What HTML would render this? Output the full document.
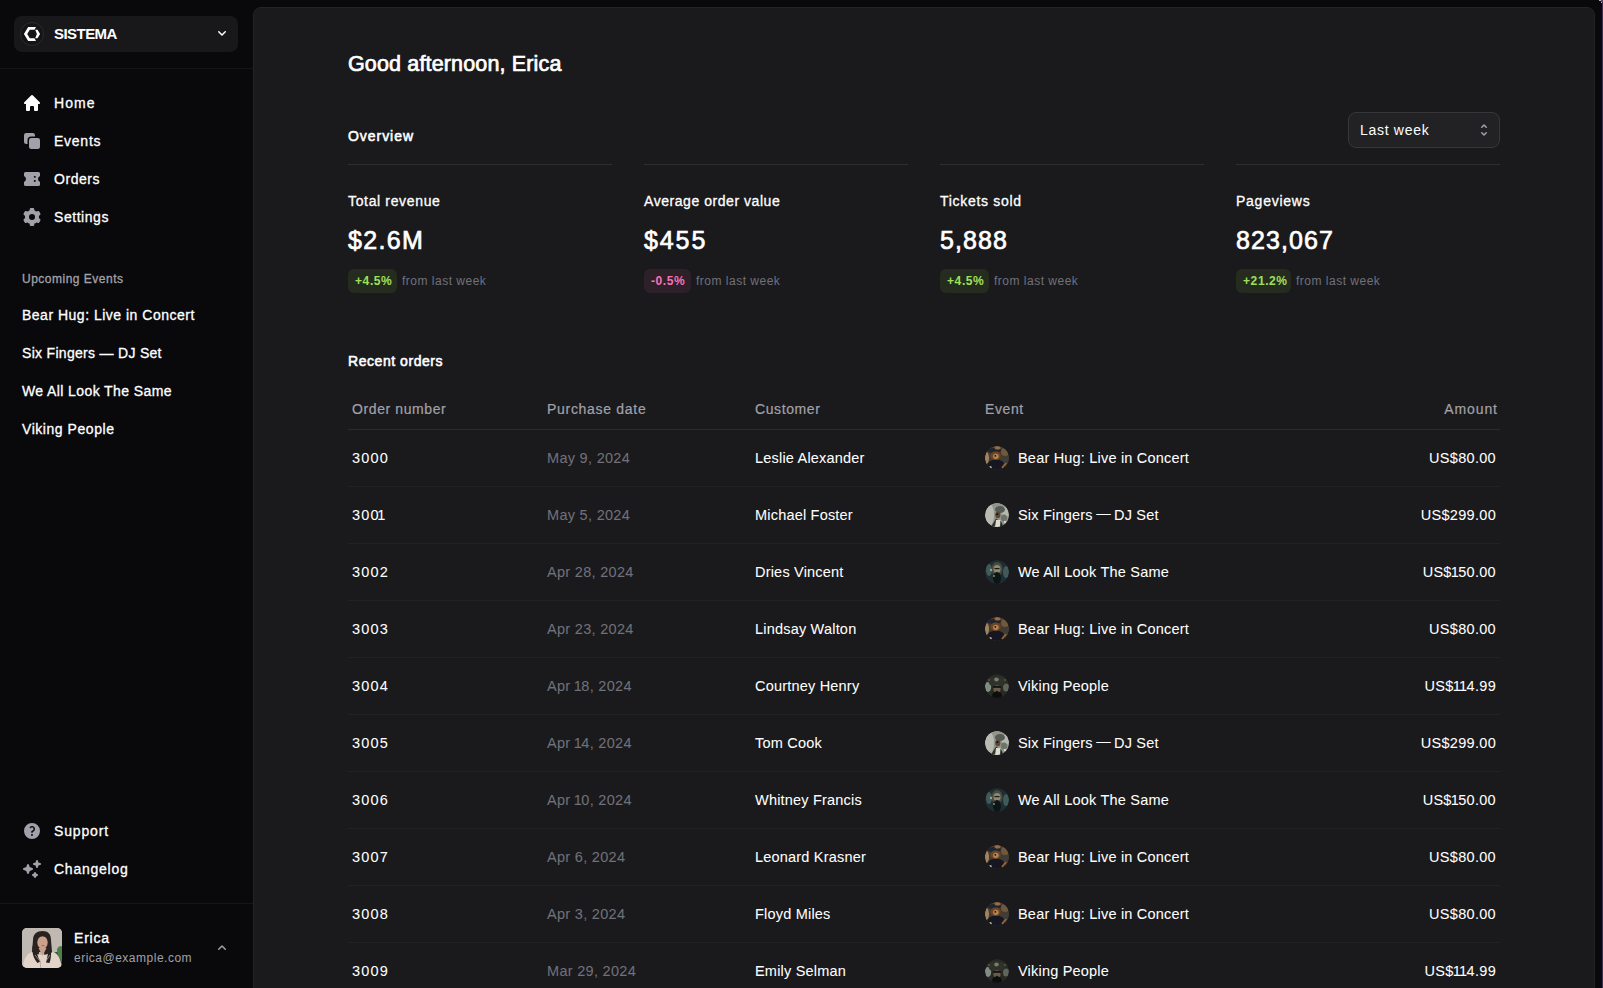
<!DOCTYPE html>
<html><head><meta charset="utf-8"><title>Dashboard</title>
<style>
*{box-sizing:border-box;margin:0;padding:0}
html,body{width:1603px;height:988px;overflow:hidden;background:#09090b;font-family:"Liberation Sans",sans-serif;color:#fff}
.abs{position:absolute}
.t{position:absolute;white-space:nowrap;line-height:1}
#sb{position:absolute;left:0;top:0;width:253px;height:988px;background:#09090b}
.team{position:absolute;left:14px;top:16px;width:224px;height:36px;border-radius:8px;background:#18181a}
.sep{position:absolute;left:0;width:253px;height:1px;background:#161618}
.nav{font-size:14px;font-weight:400;-webkit-text-stroke:.3px currentColor}
.ico{position:absolute;width:20px;height:20px}
#panel{position:absolute;left:253px;top:7px;width:1342px;height:1000px;background:#1a1a1c;border:1px solid #242427;border-radius:8px}
.divider{position:absolute;height:1px;background:#2e2e31}
.sttl{font-size:14px;font-weight:400;-webkit-text-stroke:.3px #fff}
.sval{font-size:25px;font-weight:400;-webkit-text-stroke:.7px #fff}
.badge{position:absolute;height:24px;border-radius:6px;font-size:12px;font-weight:700;line-height:24px;padding:0 0 0 7px;white-space:nowrap;letter-spacing:.6px}
.g{background:#252c1f;color:#9fe05a}
.p{background:#2d2029;color:#f472b6}
.from{font-size:12px;color:#71717a;letter-spacing:.5px}
.th{font-size:14px;color:#a1a1aa;letter-spacing:.6px;-webkit-text-stroke:.2px currentColor}
.rl{position:absolute;left:348px;width:1152px;height:1px;background:#222225}
.td{font-size:14.5px;letter-spacing:.2px;-webkit-text-stroke:.05px currentColor}
.num{letter-spacing:1px}
.dt{color:#71717a;letter-spacing:.3px}
.ev{position:absolute;width:24px;height:24px;border-radius:50%;overflow:hidden}

.bear{background:radial-gradient(circle at 50% 45%,#6b4a32 0,#3d2c22 45%,#5a4636 70%,#2a211c 100%)}
.six{background:radial-gradient(circle at 55% 45%,#3a3a3a 0,#8a8a86 40%,#cfcfca 75%,#6e6e6a 100%)}
.same{background:radial-gradient(circle at 50% 50%,#6d7a78 0,#2d3a3d 45%,#17262b 80%,#324649 100%)}
.vik{background:radial-gradient(circle at 50% 50%,#5b5e54 0,#262a24 50%,#3e4a3c 80%,#1e2420 100%)}
</style></head>
<body>

<div id="sb">
  <div class="team"></div>
  <div class="abs" style="left:20px;top:22px;width:24px;height:24px;border-radius:50%;border:1px solid #2c2c2e;background:#141416"></div>
  <svg class="abs" style="left:18px;top:20px" width="30" height="28" viewBox="0 0 30 28"><path fill="#fff" d="M10.2 7.1H18L16.5 9.8H11.8L9.2 14L11.8 18.2H16.5L18 20.9H10.2L5.9 14Z M17.2 9.7H19.5L22.1 14L19.5 18.3H17.2L18.9 14Z"/></svg>
  <div class="t" style="left:54px;top:26px;font-size:15px;font-weight:700;letter-spacing:-.55px">SISTEMA</div>
  <svg class="abs" style="left:214px;top:25px" width="16" height="16" viewBox="0 0 16 16"><path fill="#fff" fill-rule="evenodd" d="M4.22 6.22a.75.75 0 0 1 1.06 0L8 8.94l2.72-2.72a.75.75 0 1 1 1.06 1.06l-3.25 3.25a.75.75 0 0 1-1.06 0L4.22 7.28a.75.75 0 0 1 0-1.06Z"/></svg>
  <div class="sep" style="top:68px"></div>

  <svg class="ico" style="left:22px;top:93px" viewBox="0 0 20 20"><path fill="#fff" d="M9.293 2.293a1 1 0 0 1 1.414 0l7 7A1 1 0 0 1 17 11h-1v6a1 1 0 0 1-1 1h-2a1 1 0 0 1-1-1v-3a1 1 0 0 0-1-1H9a1 1 0 0 0-1 1v3a1 1 0 0 1-1 1H5a1 1 0 0 1-1-1v-6H3a1 1 0 0 1-.707-1.707l7-7Z"/></svg>
  <div class="t nav" style="letter-spacing:1.05px;left:54px;top:96px">Home</div>
  <svg class="ico" style="left:22px;top:131px" viewBox="0 0 20 20"><path fill="#a1a1aa" d="M2 4.25A2.25 2.25 0 0 1 4.25 2h6.5A2.25 2.25 0 0 1 13 4.25V5.5H9.25A3.75 3.75 0 0 0 5.5 9.25V13H4.25A2.25 2.25 0 0 1 2 10.75v-6.5Z"/><path fill="#a1a1aa" d="M9.25 7A2.25 2.25 0 0 0 7 9.25v6.5A2.25 2.25 0 0 0 9.25 18h6.5A2.25 2.25 0 0 0 18 15.75v-6.5A2.25 2.25 0 0 0 15.75 7h-6.5Z"/></svg>
  <div class="t nav" style="letter-spacing:0.75px;left:54px;top:134px">Events</div>
  <svg class="ico" style="left:22px;top:169px" viewBox="0 0 20 20"><path fill="#a1a1aa" fill-rule="evenodd" d="M3.5 3H16.5A1.5 1.5 0 0 1 18 4.5V7A3.25 3.25 0 0 0 18 13V15.5A1.5 1.5 0 0 1 16.5 17H3.5A1.5 1.5 0 0 1 2 15.5V13A3.25 3.25 0 0 0 2 7V4.5A1.5 1.5 0 0 1 3.5 3Z M12.6 7h.4a.8.8 0 0 1 .8.8v.1a.8.8 0 0 1-.8.8h-.4a.8.8 0 0 1-.8-.8v-.1a.8.8 0 0 1 .8-.8Z M12.6 11.1h.4a.8.8 0 0 1 .8.8v.2a.8.8 0 0 1-.8.8h-.4a.8.8 0 0 1-.8-.8v-.2a.8.8 0 0 1 .8-.8Z"/></svg>
  <div class="t nav" style="letter-spacing:0.55px;left:54px;top:172px">Orders</div>
  <svg class="ico" style="left:22px;top:207px" viewBox="0 0 20 20"><path fill="#a1a1aa" fill-rule="evenodd" d="M7.84 1.804A1 1 0 0 1 8.82 1h2.36a1 1 0 0 1 .98.804l.331 1.652a6.993 6.993 0 0 1 1.929 1.115l1.598-.54a1 1 0 0 1 1.186.447l1.18 2.044a1 1 0 0 1-.205 1.251l-1.267 1.113a7.047 7.047 0 0 1 0 2.228l1.267 1.113a1 1 0 0 1 .206 1.25l-1.18 2.045a1 1 0 0 1-1.187.447l-1.598-.54a6.993 6.993 0 0 1-1.929 1.115l-.33 1.652a1 1 0 0 1-.98.804H8.82a1 1 0 0 1-.98-.804l-.331-1.652a6.993 6.993 0 0 1-1.929-1.115l-1.598.54a1 1 0 0 1-1.186-.447l-1.18-2.044a1 1 0 0 1 .205-1.251l1.267-1.114a7.05 7.05 0 0 1 0-2.227L1.821 7.773a1 1 0 0 1-.206-1.25l1.18-2.045a1 1 0 0 1 1.187-.447l1.598.54A6.992 6.992 0 0 1 7.51 3.456l.33-1.652ZM10 13a3 3 0 1 0 0-6 3 3 0 0 0 0 6Z"/></svg>
  <div class="t nav" style="letter-spacing:0.55px;left:54px;top:210px">Settings</div>

  <div class="t" style="left:22px;top:273px;font-size:12px;color:#a1a1aa;letter-spacing:.5px;-webkit-text-stroke:.3px #a1a1aa">Upcoming Events</div>
  <div class="t nav" style="letter-spacing:0.5px;left:22px;top:308px">Bear Hug: Live in Concert</div>
  <div class="t nav" style="letter-spacing:0.3px;left:22px;top:346px">Six Fingers — DJ Set</div>
  <div class="t nav" style="letter-spacing:0.4px;left:22px;top:384px">We All Look The Same</div>
  <div class="t nav" style="letter-spacing:0.55px;left:22px;top:422px">Viking People</div>

  <svg class="ico" style="left:22px;top:821px" viewBox="0 0 20 20"><path fill="#a1a1aa" fill-rule="evenodd" d="M18 10a8 8 0 1 1-16 0 8 8 0 0 1 16 0ZM8.94 6.94a.75.75 0 1 1-1.061-1.061 3 3 0 1 1 2.871 5.026v.345a.75.75 0 0 1-1.5 0v-.5c0-.72.57-1.172 1.081-1.287A1.5 1.5 0 1 0 8.94 6.94ZM10 15a1 1 0 1 0 0-2 1 1 0 0 0 0 2Z"/></svg>
  <div class="t nav" style="letter-spacing:0.85px;left:54px;top:824px">Support</div>
  <svg class="ico" style="left:22px;top:859px" viewBox="0 0 20 20"><path fill="#a1a1aa" d="M15.98 1.804a1 1 0 0 0-1.96 0l-.24 1.192a1 1 0 0 1-.784.785l-1.192.238a1 1 0 0 0 0 1.962l1.192.238a1 1 0 0 1 .785.785l.238 1.192a1 1 0 0 0 1.962 0l.238-1.192a1 1 0 0 1 .785-.785l1.192-.238a1 1 0 0 0 0-1.962l-1.192-.238a1 1 0 0 1-.785-.785l-.238-1.192ZM6.949 5.684a1 1 0 0 0-1.898 0l-.683 2.051a1 1 0 0 1-.633.633l-2.051.683a1 1 0 0 0 0 1.898l2.051.684a1 1 0 0 1 .633.632l.683 2.051a1 1 0 0 0 1.898 0l.683-2.051a1 1 0 0 1 .633-.633l2.051-.683a1 1 0 0 0 0-1.898l-2.051-.683a1 1 0 0 1-.633-.633L6.95 5.684ZM13.949 13.684a1 1 0 0 0-1.898 0l-.184.551a1 1 0 0 1-.632.633l-.551.183a1 1 0 0 0 0 1.898l.551.183a1 1 0 0 1 .633.633l.183.551a1 1 0 0 0 1.898 0l.184-.551a1 1 0 0 1 .632-.633l.551-.183a1 1 0 0 0 0-1.898l-.551-.184a1 1 0 0 1-.633-.632l-.183-.551Z"/></svg>
  <div class="t nav" style="letter-spacing:0.75px;left:54px;top:862px">Changelog</div>

  <div class="sep" style="top:903px"></div>
  <div class="abs" style="left:22px;top:928px;width:40px;height:40px;border-radius:5px;overflow:hidden;background:#bdb6ae">
    <svg width="40" height="40" viewBox="0 0 40 40"><defs><filter id="fu" x="-10%" y="-10%" width="120%" height="120%"><feGaussianBlur stdDeviation="0.7"/></filter></defs><g filter="url(#fu)"><rect x="-2" y="-2" width="44" height="44" fill="#c0b9b1"/><path d="M27 27c4-3 8-4 14-3v17H29z" fill="#33553a"/><path d="M35 21c2-4 6-4 6 0v13c-3-2-6-7-6-13z" fill="#4f8048"/><path d="M11 12c0-6 4-9 9.5-9S29 6 29 12l1 12c0 5 0 9-1 12h-6l-1-12h-5l-1 12h-5c-1-4-1-8-1-12z" fill="#2a2220"/><path d="M1 41c0-9 3-15 9-17l3 1c2 1 5 2 7.5 2s5-1 7-2l4-1c5 2 8 8 8 17z" fill="#e3d4ca"/><path d="M16.5 20h8l-4 8z" fill="#c99f8a"/><path d="M10.5 18c-.5 6 .5 12 5 17l3-1.5c-3-4-4-10-4-15zM26 18c.5 6-.5 11-2 16.5l3.5.5c1.5-4 2-10 1.5-17z" fill="#2a2220"/><ellipse cx="20.5" cy="14.5" rx="5.2" ry="6.5" fill="#c9a18c"/><path d="M14.5 11.5c0-5 2.5-7.5 6-7.5s6.5 2.5 6.5 7.5c-2-2.2-4-3.3-6.5-3.3s-4 1.1-6 3.3z" fill="#2a2220"/><ellipse cx="21" cy="17.6" rx="1.5" ry=".6" fill="#a0605a"/><path d="M13 27l5 6 1 8M28 27l-4 6" stroke="#b89c90" stroke-width=".8" fill="none"/></g></svg>
  </div>
  <div class="t" style="left:74px;top:931px;font-size:14px;letter-spacing:.8px;-webkit-text-stroke:.35px #fff">Erica</div>
  <div class="t" style="left:74px;top:952px;font-size:12px;color:#a1a1aa;letter-spacing:.5px">erica@example.com</div>
  <svg class="abs" style="left:214px;top:940px" width="16" height="16" viewBox="0 0 16 16"><path fill="#a1a1aa" fill-rule="evenodd" d="M11.78 9.78a.75.75 0 0 1-1.06 0L8 7.06 5.28 9.78a.75.75 0 0 1-1.06-1.06l3.25-3.25a.75.75 0 0 1 1.06 0l3.25 3.25a.75.75 0 0 1 0 1.06Z"/></svg>
</div>

<div id="panel"></div>
<div class="abs" style="left:1602px;top:0;width:1px;height:988px;background:#432f55"></div><div class="abs" style="left:1599px;top:0;width:2px;height:1px;background:#b9aed0"></div><div class="abs" style="left:1601px;top:2px;width:1px;height:1px;background:#b9aed0"></div><div class="abs" style="left:1601px;top:0;width:2px;height:2px;background:#5a4a70"></div>

<div class="t" style="left:348px;top:54px;font-size:21.5px;font-weight:400;letter-spacing:.15px;-webkit-text-stroke:.7px #fff">Good afternoon, Erica</div>
<div class="t" style="left:348px;top:129px;font-size:14px;letter-spacing:.95px;-webkit-text-stroke:.55px #fff">Overview</div>
<div class="abs" style="left:1348px;top:112px;width:152px;height:36px;border-radius:8px;border:1px solid #37373a;background:#222225"></div>
<div class="t" style="left:1360px;top:123px;font-size:14px;letter-spacing:.7px">Last week</div>
<svg class="abs" style="left:1476px;top:122px" width="16" height="16" viewBox="0 0 16 16" fill="none"><path d="M5.75 10.75L8 13L10.25 10.75" stroke="#a1a1aa" stroke-width="1.5" stroke-linecap="round" stroke-linejoin="round"/><path d="M10.25 5.25L8 3L5.75 5.25" stroke="#a1a1aa" stroke-width="1.5" stroke-linecap="round" stroke-linejoin="round"/></svg>

<div class="divider" style="left:348px;top:164px;width:264px"></div>
<div class="t sttl" style="left:348px;top:194px;letter-spacing:0.65px">Total revenue</div>
<div class="t sval" style="left:348px;top:228px;letter-spacing:1.35px">$2.6M</div>
<div class="badge g" style="left:348px;top:269px;width:49px">+4.5%</div>
<div class="t from" style="left:402px;top:275px">from last week</div>
<div class="divider" style="left:644px;top:164px;width:264px"></div>
<div class="t sttl" style="left:644px;top:194px;letter-spacing:0.55px">Average order value</div>
<div class="t sval" style="left:644px;top:228px;letter-spacing:1.9px">$455</div>
<div class="badge p" style="left:644px;top:269px;width:47px">-0.5%</div>
<div class="t from" style="left:696px;top:275px">from last week</div>
<div class="divider" style="left:940px;top:164px;width:264px"></div>
<div class="t sttl" style="left:940px;top:194px;letter-spacing:0.7px">Tickets sold</div>
<div class="t sval" style="left:940px;top:228px;letter-spacing:1.1px">5,888</div>
<div class="badge g" style="left:940px;top:269px;width:49px">+4.5%</div>
<div class="t from" style="left:994px;top:275px">from last week</div>
<div class="divider" style="left:1236px;top:164px;width:264px"></div>
<div class="t sttl" style="left:1236px;top:194px;letter-spacing:0.75px">Pageviews</div>
<div class="t sval" style="left:1236px;top:228px;letter-spacing:1.1px">823,067</div>
<div class="badge g" style="left:1236px;top:269px;width:55px">+21.2%</div>
<div class="t from" style="left:1296px;top:275px">from last week</div>
<div class="t" style="left:348px;top:354px;font-size:14px;letter-spacing:.55px;-webkit-text-stroke:.55px #fff">Recent orders</div>
<div class="t th" style="left:352px;top:402px">Order number</div>
<div class="t th" style="left:547px;top:402px;letter-spacing:.7px">Purchase date</div>
<div class="t th" style="left:755px;top:402px">Customer</div>
<div class="t th" style="left:985px;top:402px">Event</div>
<div class="t th" style="right:105.1px;top:402px;letter-spacing:.9px">Amount</div>
<div class="rl" style="top:429px;background:#2b2b2e"></div>
<div class="t td" style="letter-spacing:1.2px;left:352px;top:451px">3000</div>
<div class="t td dt" style="left:547px;top:451px">May 9, 2024</div>
<div class="t td" style="left:755px;top:451px">Leslie Alexander</div>
<div class="ev" style="left:985px;top:446px"><svg width="24" height="24" viewBox="0 0 24 24"><defs><clipPath id="c0b"><circle cx="12" cy="12" r="12"/></clipPath><filter id="f0b" x="-20%" y="-20%" width="140%" height="140%"><feGaussianBlur stdDeviation="0.6"/></filter></defs><g clip-path="url(#c0b)"><rect width="24" height="24" fill="#4a3c30"/><g filter="url(#f0b)"><rect x="-2" y="-2" width="28" height="28" fill="#4a3a2c"/><ellipse cx="1.5" cy="12" rx="2.5" ry="6" fill="#a08462"/><ellipse cx="20" cy="6" rx="4" ry="4" fill="#6e5840"/><ellipse cx="21" cy="14" rx="3.5" ry="3" fill="#3c3c3a"/><ellipse cx="11" cy="19.5" rx="9" ry="6" fill="#121820"/><ellipse cx="9" cy="4.5" rx="7" ry="2.4" fill="#1e2833"/><ellipse cx="12.5" cy="1.8" rx="3" ry="1.8" fill="#9a6a42"/><ellipse cx="10.6" cy="9.8" rx="5" ry="4.3" fill="#6f4528"/><ellipse cx="10.8" cy="10.3" rx="2.8" ry="2.6" fill="#b08658"/><ellipse cx="10.3" cy="9.9" rx="0.9" ry="0.8" fill="#140e0a"/><path d="M17 22l4-5" stroke="#9a6234" stroke-width="2"/><circle cx="5.5" cy="21.3" r="1.2" fill="#b8a888"/></g></g></svg></div>
<div class="t td" style="left:1018px;top:451px">Bear Hug: Live in Concert</div>
<div class="t td" style="right:107px;top:451px;letter-spacing:.3px">US$80.00</div>
<div class="rl" style="top:486px"></div>
<div class="t td" style="letter-spacing:1.2px;left:352px;top:508px">300<span style="margin-left:-2.6px;letter-spacing:-.2px">1</span></div>
<div class="t td dt" style="left:547px;top:508px">May 5, 2024</div>
<div class="t td" style="left:755px;top:508px">Michael Foster</div>
<div class="ev" style="left:985px;top:503px"><svg width="24" height="24" viewBox="0 0 24 24"><defs><clipPath id="c1s"><circle cx="12" cy="12" r="12"/></clipPath><filter id="f1s" x="-20%" y="-20%" width="140%" height="140%"><feGaussianBlur stdDeviation="0.6"/></filter></defs><g clip-path="url(#c1s)"><rect width="24" height="24" fill="#8e9189"/><g filter="url(#f1s)"><rect x="-2" y="-2" width="28" height="28" fill="#92958c"/><ellipse cx="4.5" cy="12" rx="4.5" ry="11" fill="#b9bbb2"/><ellipse cx="20.5" cy="9" rx="4" ry="5" fill="#b4b8ae"/><ellipse cx="15" cy="6.5" rx="5" ry="3.5" fill="#555b55"/><ellipse cx="19" cy="15" rx="3" ry="3.5" fill="#6d726b"/><ellipse cx="12.8" cy="12" rx="2.6" ry="3.2" fill="#5e4636"/><ellipse cx="12.3" cy="11.2" rx="1" ry=".9" fill="#0c0a08"/><path d="M11 15.5l-4.5 7.5h3.5l3-6z" fill="#33332c"/><path d="M11 17h5l1 8h-7z" fill="#dcdccd"/><path d="M15.5 17l3.5 8h-4z" fill="#1b2624"/><circle cx="20" cy="19" r="1.2" fill="#d8d4c4"/></g></g></svg></div>
<div class="t td" style="left:1018px;top:508px">Six Fingers<span style="letter-spacing:-.5px"> </span><span style="position:relative;top:-1.6px;letter-spacing:-.3px">—</span><span style="letter-spacing:-.5px"> </span>DJ Set</div>
<div class="t td" style="right:107px;top:508px;letter-spacing:.3px">US$299.00</div>
<div class="rl" style="top:543px"></div>
<div class="t td" style="letter-spacing:1.2px;left:352px;top:565px">3002</div>
<div class="t td dt" style="left:547px;top:565px">Apr 28, 2024</div>
<div class="t td" style="left:755px;top:565px">Dries Vincent</div>
<div class="ev" style="left:985px;top:560px"><svg width="24" height="24" viewBox="0 0 24 24"><defs><clipPath id="c2m"><circle cx="12" cy="12" r="12"/></clipPath><filter id="f2m" x="-20%" y="-20%" width="140%" height="140%"><feGaussianBlur stdDeviation="0.7"/></filter></defs><g clip-path="url(#c2m)"><rect width="24" height="24" fill="#1c2e33"/><g filter="url(#f2m)"><ellipse cx="4" cy="10" rx="3" ry="6" fill="#3f5a5c"/><ellipse cx="21" cy="12" rx="3" ry="6" fill="#3f5a5c"/><ellipse cx="12" cy="9" rx="5.5" ry="7" fill="#4a4a3e"/><ellipse cx="12" cy="9" rx="3.5" ry="4" fill="#8a8a72"/><rect x="9.5" y="8" width="5" height="1.2" fill="#1a1a16"/><ellipse cx="12" cy="18" rx="4" ry="6" fill="#0e1416"/><circle cx="6" cy="10" r="1.2" fill="#9aa08a"/><circle cx="9" cy="16" r="1" fill="#8a8a70"/></g></g></svg></div>
<div class="t td" style="left:1018px;top:565px">We All Look The Same</div>
<div class="t td" style="right:107px;top:565px;letter-spacing:.3px">US$<span style="margin-left:-1px;letter-spacing:-.6px">1</span>50.00</div>
<div class="rl" style="top:600px"></div>
<div class="t td" style="letter-spacing:1.2px;left:352px;top:622px">3003</div>
<div class="t td dt" style="left:547px;top:622px">Apr 23, 2024</div>
<div class="t td" style="left:755px;top:622px">Lindsay Walton</div>
<div class="ev" style="left:985px;top:617px"><svg width="24" height="24" viewBox="0 0 24 24"><defs><clipPath id="c3b"><circle cx="12" cy="12" r="12"/></clipPath><filter id="f3b" x="-20%" y="-20%" width="140%" height="140%"><feGaussianBlur stdDeviation="0.6"/></filter></defs><g clip-path="url(#c3b)"><rect width="24" height="24" fill="#4a3c30"/><g filter="url(#f3b)"><rect x="-2" y="-2" width="28" height="28" fill="#4a3a2c"/><ellipse cx="1.5" cy="12" rx="2.5" ry="6" fill="#a08462"/><ellipse cx="20" cy="6" rx="4" ry="4" fill="#6e5840"/><ellipse cx="21" cy="14" rx="3.5" ry="3" fill="#3c3c3a"/><ellipse cx="11" cy="19.5" rx="9" ry="6" fill="#121820"/><ellipse cx="9" cy="4.5" rx="7" ry="2.4" fill="#1e2833"/><ellipse cx="12.5" cy="1.8" rx="3" ry="1.8" fill="#9a6a42"/><ellipse cx="10.6" cy="9.8" rx="5" ry="4.3" fill="#6f4528"/><ellipse cx="10.8" cy="10.3" rx="2.8" ry="2.6" fill="#b08658"/><ellipse cx="10.3" cy="9.9" rx="0.9" ry="0.8" fill="#140e0a"/><path d="M17 22l4-5" stroke="#9a6234" stroke-width="2"/><circle cx="5.5" cy="21.3" r="1.2" fill="#b8a888"/></g></g></svg></div>
<div class="t td" style="left:1018px;top:622px">Bear Hug: Live in Concert</div>
<div class="t td" style="right:107px;top:622px;letter-spacing:.3px">US$80.00</div>
<div class="rl" style="top:657px"></div>
<div class="t td" style="letter-spacing:1.2px;left:352px;top:679px">3004</div>
<div class="t td dt" style="left:547px;top:679px">Apr <span style="margin-left:-1px;letter-spacing:-.6px">1</span>8, 2024</div>
<div class="t td" style="left:755px;top:679px">Courtney Henry</div>
<div class="ev" style="left:985px;top:674px"><svg width="24" height="24" viewBox="0 0 24 24"><defs><clipPath id="c4v"><circle cx="12" cy="12" r="12"/></clipPath><filter id="f4v" x="-20%" y="-20%" width="140%" height="140%"><feGaussianBlur stdDeviation="0.6"/></filter></defs><g clip-path="url(#c4v)"><rect width="24" height="24" fill="#252a25"/><g filter="url(#f4v)"><ellipse cx="3" cy="13" rx="3.2" ry="5" fill="#7f8d84"/><ellipse cx="21" cy="13.5" rx="3" ry="4" fill="#5f655a"/><ellipse cx="12" cy="7.5" rx="8.5" ry="5.5" fill="#2e302a"/><ellipse cx="11.5" cy="5.5" rx="2.3" ry="2" fill="#7a7a6e"/><circle cx="4" cy="6" r="1" fill="#7a4a3a"/><circle cx="20" cy="6" r="1" fill="#7a4a3a"/><ellipse cx="12" cy="15" rx="3.6" ry="3.8" fill="#6e5a48"/><rect x="8" y="12" width="8" height="1.8" fill="#121212"/><ellipse cx="12" cy="17.6" rx="1.1" ry=".8" fill="#1a1210"/><ellipse cx="12" cy="21.5" rx="5" ry="4" fill="#0e110f"/></g></g></svg></div>
<div class="t td" style="left:1018px;top:679px">Viking People</div>
<div class="t td" style="right:107px;top:679px;letter-spacing:.3px">US$<span style="margin-left:-1px;letter-spacing:-.6px">1</span><span style="margin-left:-1px;letter-spacing:-.6px">1</span>4.99</div>
<div class="rl" style="top:714px"></div>
<div class="t td" style="letter-spacing:1.2px;left:352px;top:736px">3005</div>
<div class="t td dt" style="left:547px;top:736px">Apr <span style="margin-left:-1px;letter-spacing:-.6px">1</span>4, 2024</div>
<div class="t td" style="left:755px;top:736px">Tom Cook</div>
<div class="ev" style="left:985px;top:731px"><svg width="24" height="24" viewBox="0 0 24 24"><defs><clipPath id="c5s"><circle cx="12" cy="12" r="12"/></clipPath><filter id="f5s" x="-20%" y="-20%" width="140%" height="140%"><feGaussianBlur stdDeviation="0.6"/></filter></defs><g clip-path="url(#c5s)"><rect width="24" height="24" fill="#8e9189"/><g filter="url(#f5s)"><rect x="-2" y="-2" width="28" height="28" fill="#92958c"/><ellipse cx="4.5" cy="12" rx="4.5" ry="11" fill="#b9bbb2"/><ellipse cx="20.5" cy="9" rx="4" ry="5" fill="#b4b8ae"/><ellipse cx="15" cy="6.5" rx="5" ry="3.5" fill="#555b55"/><ellipse cx="19" cy="15" rx="3" ry="3.5" fill="#6d726b"/><ellipse cx="12.8" cy="12" rx="2.6" ry="3.2" fill="#5e4636"/><ellipse cx="12.3" cy="11.2" rx="1" ry=".9" fill="#0c0a08"/><path d="M11 15.5l-4.5 7.5h3.5l3-6z" fill="#33332c"/><path d="M11 17h5l1 8h-7z" fill="#dcdccd"/><path d="M15.5 17l3.5 8h-4z" fill="#1b2624"/><circle cx="20" cy="19" r="1.2" fill="#d8d4c4"/></g></g></svg></div>
<div class="t td" style="left:1018px;top:736px">Six Fingers<span style="letter-spacing:-.5px"> </span><span style="position:relative;top:-1.6px;letter-spacing:-.3px">—</span><span style="letter-spacing:-.5px"> </span>DJ Set</div>
<div class="t td" style="right:107px;top:736px;letter-spacing:.3px">US$299.00</div>
<div class="rl" style="top:771px"></div>
<div class="t td" style="letter-spacing:1.2px;left:352px;top:793px">3006</div>
<div class="t td dt" style="left:547px;top:793px">Apr <span style="margin-left:-1px;letter-spacing:-.6px">1</span>0, 2024</div>
<div class="t td" style="left:755px;top:793px">Whitney Francis</div>
<div class="ev" style="left:985px;top:788px"><svg width="24" height="24" viewBox="0 0 24 24"><defs><clipPath id="c6m"><circle cx="12" cy="12" r="12"/></clipPath><filter id="f6m" x="-20%" y="-20%" width="140%" height="140%"><feGaussianBlur stdDeviation="0.7"/></filter></defs><g clip-path="url(#c6m)"><rect width="24" height="24" fill="#1c2e33"/><g filter="url(#f6m)"><ellipse cx="4" cy="10" rx="3" ry="6" fill="#3f5a5c"/><ellipse cx="21" cy="12" rx="3" ry="6" fill="#3f5a5c"/><ellipse cx="12" cy="9" rx="5.5" ry="7" fill="#4a4a3e"/><ellipse cx="12" cy="9" rx="3.5" ry="4" fill="#8a8a72"/><rect x="9.5" y="8" width="5" height="1.2" fill="#1a1a16"/><ellipse cx="12" cy="18" rx="4" ry="6" fill="#0e1416"/><circle cx="6" cy="10" r="1.2" fill="#9aa08a"/><circle cx="9" cy="16" r="1" fill="#8a8a70"/></g></g></svg></div>
<div class="t td" style="left:1018px;top:793px">We All Look The Same</div>
<div class="t td" style="right:107px;top:793px;letter-spacing:.3px">US$<span style="margin-left:-1px;letter-spacing:-.6px">1</span>50.00</div>
<div class="rl" style="top:828px"></div>
<div class="t td" style="letter-spacing:1.2px;left:352px;top:850px">3007</div>
<div class="t td dt" style="left:547px;top:850px">Apr 6, 2024</div>
<div class="t td" style="left:755px;top:850px">Leonard Krasner</div>
<div class="ev" style="left:985px;top:845px"><svg width="24" height="24" viewBox="0 0 24 24"><defs><clipPath id="c7b"><circle cx="12" cy="12" r="12"/></clipPath><filter id="f7b" x="-20%" y="-20%" width="140%" height="140%"><feGaussianBlur stdDeviation="0.6"/></filter></defs><g clip-path="url(#c7b)"><rect width="24" height="24" fill="#4a3c30"/><g filter="url(#f7b)"><rect x="-2" y="-2" width="28" height="28" fill="#4a3a2c"/><ellipse cx="1.5" cy="12" rx="2.5" ry="6" fill="#a08462"/><ellipse cx="20" cy="6" rx="4" ry="4" fill="#6e5840"/><ellipse cx="21" cy="14" rx="3.5" ry="3" fill="#3c3c3a"/><ellipse cx="11" cy="19.5" rx="9" ry="6" fill="#121820"/><ellipse cx="9" cy="4.5" rx="7" ry="2.4" fill="#1e2833"/><ellipse cx="12.5" cy="1.8" rx="3" ry="1.8" fill="#9a6a42"/><ellipse cx="10.6" cy="9.8" rx="5" ry="4.3" fill="#6f4528"/><ellipse cx="10.8" cy="10.3" rx="2.8" ry="2.6" fill="#b08658"/><ellipse cx="10.3" cy="9.9" rx="0.9" ry="0.8" fill="#140e0a"/><path d="M17 22l4-5" stroke="#9a6234" stroke-width="2"/><circle cx="5.5" cy="21.3" r="1.2" fill="#b8a888"/></g></g></svg></div>
<div class="t td" style="left:1018px;top:850px">Bear Hug: Live in Concert</div>
<div class="t td" style="right:107px;top:850px;letter-spacing:.3px">US$80.00</div>
<div class="rl" style="top:885px"></div>
<div class="t td" style="letter-spacing:1.2px;left:352px;top:907px">3008</div>
<div class="t td dt" style="left:547px;top:907px">Apr 3, 2024</div>
<div class="t td" style="left:755px;top:907px">Floyd Miles</div>
<div class="ev" style="left:985px;top:902px"><svg width="24" height="24" viewBox="0 0 24 24"><defs><clipPath id="c8b"><circle cx="12" cy="12" r="12"/></clipPath><filter id="f8b" x="-20%" y="-20%" width="140%" height="140%"><feGaussianBlur stdDeviation="0.6"/></filter></defs><g clip-path="url(#c8b)"><rect width="24" height="24" fill="#4a3c30"/><g filter="url(#f8b)"><rect x="-2" y="-2" width="28" height="28" fill="#4a3a2c"/><ellipse cx="1.5" cy="12" rx="2.5" ry="6" fill="#a08462"/><ellipse cx="20" cy="6" rx="4" ry="4" fill="#6e5840"/><ellipse cx="21" cy="14" rx="3.5" ry="3" fill="#3c3c3a"/><ellipse cx="11" cy="19.5" rx="9" ry="6" fill="#121820"/><ellipse cx="9" cy="4.5" rx="7" ry="2.4" fill="#1e2833"/><ellipse cx="12.5" cy="1.8" rx="3" ry="1.8" fill="#9a6a42"/><ellipse cx="10.6" cy="9.8" rx="5" ry="4.3" fill="#6f4528"/><ellipse cx="10.8" cy="10.3" rx="2.8" ry="2.6" fill="#b08658"/><ellipse cx="10.3" cy="9.9" rx="0.9" ry="0.8" fill="#140e0a"/><path d="M17 22l4-5" stroke="#9a6234" stroke-width="2"/><circle cx="5.5" cy="21.3" r="1.2" fill="#b8a888"/></g></g></svg></div>
<div class="t td" style="left:1018px;top:907px">Bear Hug: Live in Concert</div>
<div class="t td" style="right:107px;top:907px;letter-spacing:.3px">US$80.00</div>
<div class="rl" style="top:942px"></div>
<div class="t td" style="letter-spacing:1.2px;left:352px;top:964px">3009</div>
<div class="t td dt" style="left:547px;top:964px">Mar 29, 2024</div>
<div class="t td" style="left:755px;top:964px">Emily Selman</div>
<div class="ev" style="left:985px;top:959px"><svg width="24" height="24" viewBox="0 0 24 24"><defs><clipPath id="c9v"><circle cx="12" cy="12" r="12"/></clipPath><filter id="f9v" x="-20%" y="-20%" width="140%" height="140%"><feGaussianBlur stdDeviation="0.6"/></filter></defs><g clip-path="url(#c9v)"><rect width="24" height="24" fill="#252a25"/><g filter="url(#f9v)"><ellipse cx="3" cy="13" rx="3.2" ry="5" fill="#7f8d84"/><ellipse cx="21" cy="13.5" rx="3" ry="4" fill="#5f655a"/><ellipse cx="12" cy="7.5" rx="8.5" ry="5.5" fill="#2e302a"/><ellipse cx="11.5" cy="5.5" rx="2.3" ry="2" fill="#7a7a6e"/><circle cx="4" cy="6" r="1" fill="#7a4a3a"/><circle cx="20" cy="6" r="1" fill="#7a4a3a"/><ellipse cx="12" cy="15" rx="3.6" ry="3.8" fill="#6e5a48"/><rect x="8" y="12" width="8" height="1.8" fill="#121212"/><ellipse cx="12" cy="17.6" rx="1.1" ry=".8" fill="#1a1210"/><ellipse cx="12" cy="21.5" rx="5" ry="4" fill="#0e110f"/></g></g></svg></div>
<div class="t td" style="left:1018px;top:964px">Viking People</div>
<div class="t td" style="right:107px;top:964px;letter-spacing:.3px">US$<span style="margin-left:-1px;letter-spacing:-.6px">1</span><span style="margin-left:-1px;letter-spacing:-.6px">1</span>4.99</div>
</body></html>
